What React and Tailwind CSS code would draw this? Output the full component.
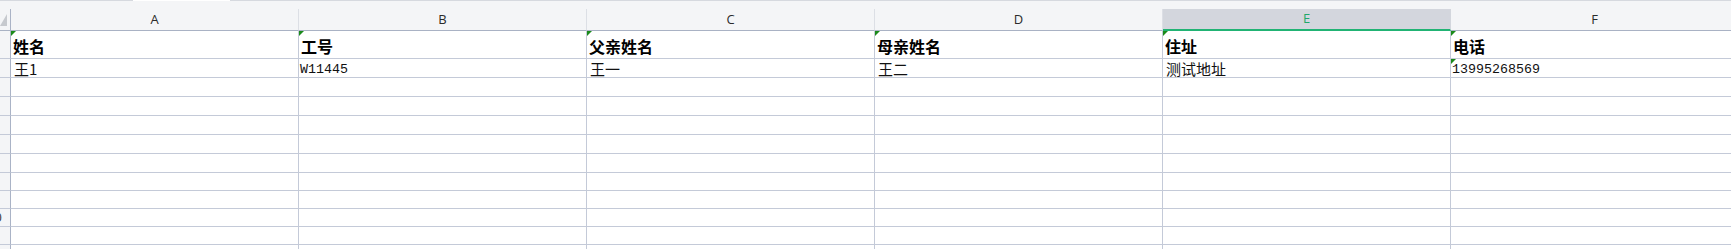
import React from "react";

const cols = ["A", "B", "C", "D", "E", "F"];
const row1 = ["姓名", "工号", "父亲姓名", "母亲姓名", "住址", "电话"];
const row2 = [
  { t: "王1", mono: false },
  { t: "W11445", mono: true },
  { t: "王一", mono: false },
  { t: "王二", mono: false },
  { t: "测试地址", mono: false },
  { t: "13995268569", mono: true, flag: true },
];
const emptyHeights = [19, 19, 19, 19, 19, 18, 18, 18, 18, 18];

function Flag() {
  return (
    <span className="absolute left-0 top-0 w-0 h-0 border-t-[5px] border-r-[5px] border-t-[#1b8a1b] border-r-transparent" />
  );
}

function RowHead({ n, h }) {
  return (
    <div
      className="w-[11px] shrink-0 overflow-hidden bg-[#f4f5f7] border-r border-b border-r-[#aab3c6] border-b-[#c4cad8] flex justify-end"
      style={{ height: h }}
    >
      <div className="w-[30px] shrink-0 flex items-center justify-center text-[12px] text-[#333] font-['Liberation_Sans',sans-serif]">
        {n}
      </div>
    </div>
  );
}

export default function App() {
  return (
    <div className="w-[1731px] h-[249px] overflow-hidden bg-white flex flex-col">
      {/* top line */}
      <div className="h-px flex shrink-0">
        <div className="w-[133px] bg-[#d6d9df]" />
        <div className="w-[97px] bg-white" />
        <div className="flex-1 bg-[#d6d9df]" />
      </div>
      <div className="h-[8px] shrink-0 bg-[#f4f5f7]" />
      {/* column header */}
      <div className="flex h-[22px] shrink-0 bg-[#f4f5f7]">
        <div className="w-[11px] shrink-0 h-[22px] border-r border-b border-r-[#aab3c6] border-b-[#a9b2c4] relative">
          <svg width="10" height="21" className="block">
            <polygon points="7,5 7,17 0,17" fill="#c6c9ce" />
          </svg>
        </div>
        {cols.map((c) => {
          const sel = c === "E";
          return (
            <div
              key={c}
              className={
                sel
                  ? "w-[288px] shrink-0 h-[22px] flex items-center justify-center bg-[#d3d6dd] border-r border-r-[#d3d6dd] border-b-2 border-b-[#21b374] text-[13px] text-[#1fa86a] font-['Open_Sans',sans-serif]"
                  : "w-[288px] shrink-0 h-[22px] flex items-center justify-center border-r border-r-[#dcdfe5] border-b border-b-[#a9b2c4] text-[13px] text-[#2b2b2b] font-['Open_Sans',sans-serif]"
              }
            >
              {c}
            </div>
          );
        })}
        <div className="flex-1 border-b border-b-[#a9b2c4]" />
      </div>
      {/* row 1 */}
      <div className="flex shrink-0 h-[28px]">
        <RowHead n="" h={28} />
        {row1.map((t, i) => (
          <div
            key={i}
            className="relative w-[288px] shrink-0 h-[28px] border-r border-b border-[#c4cad8] flex items-end pb-[3px] pl-[2px] text-[16px] leading-[18px] font-bold text-black font-['Noto_Sans_CJK_SC',sans-serif]"
          >
            <Flag />
            {t}
          </div>
        ))}
        <div className="flex-1 h-[28px] border-b border-[#c4cad8]" />
      </div>
      {/* row 2 */}
      <div className="flex shrink-0 h-[19px]">
        <RowHead n="" h={19} />
        {row2.map((c, i) => (
          <div
            key={i}
            className={
              c.mono
                ? "relative w-[288px] shrink-0 h-[19px] border-r border-b border-[#c4cad8] flex items-end pl-[1px] text-[13.33px] leading-[14px] text-[#111] font-['Liberation_Mono','Noto_Sans_CJK_SC',monospace]"
                : "relative w-[288px] shrink-0 h-[19px] border-r border-b border-[#c4cad8] flex items-end pl-[3px] text-[15px] leading-[16px] text-[#111] font-['Noto_Sans_CJK_SC',sans-serif]"
            }
          >
            {c.flag && <Flag />}
            {c.t}
          </div>
        ))}
        <div className="flex-1 h-[19px] border-b border-[#c4cad8]" />
      </div>
      {/* empty rows */}
      {emptyHeights.map((h, r) => (
        <div key={r} className="flex shrink-0" style={{ height: h }}>
          <RowHead n={r + 3 === 10 ? "10" : ""} h={h} />
          {cols.map((c) => (
            <div
              key={c}
              className="w-[288px] shrink-0 border-r border-b border-[#c4cad8]"
              style={{ height: h }}
            />
          ))}
          <div className="flex-1 border-b border-[#c4cad8]" />
        </div>
      ))}
    </div>
  );
}
